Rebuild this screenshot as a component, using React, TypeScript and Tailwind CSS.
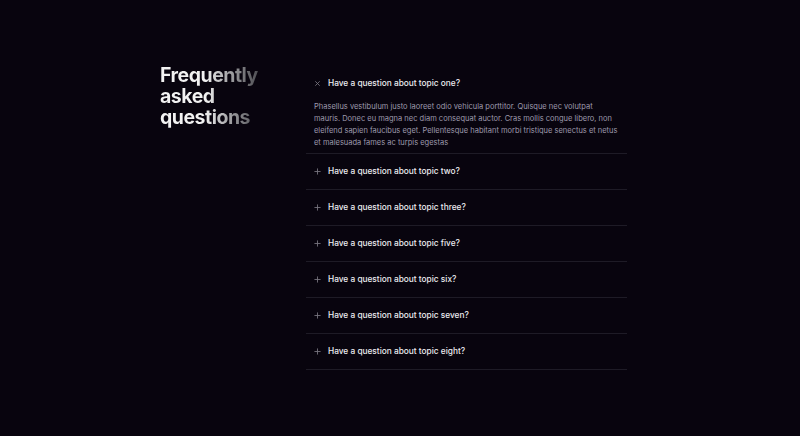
import React, { useState } from "react";

const items = [
  { q: "Have a question about topic one?", a: "Phasellus vestibulum justo laoreet odio vehicula porttitor. Quisque nec volutpat mauris. Donec eu magna nec diam consequat auctor. Cras mollis congue libero, non eleifend sapien faucibus eget. Pellentesque habitant morbi tristique senectus et netus et malesuada fames ac turpis egestas" },
  { q: "Have a question about topic two?", a: "Phasellus vestibulum justo laoreet odio vehicula porttitor." },
  { q: "Have a question about topic three?", a: "Phasellus vestibulum justo laoreet odio vehicula porttitor." },
  { q: "Have a question about topic five?", a: "Phasellus vestibulum justo laoreet odio vehicula porttitor." },
  { q: "Have a question about topic six?", a: "Phasellus vestibulum justo laoreet odio vehicula porttitor." },
  { q: "Have a question about topic seven?", a: "Phasellus vestibulum justo laoreet odio vehicula porttitor." },
  { q: "Have a question about topic eight?", a: "Phasellus vestibulum justo laoreet odio vehicula porttitor." },
];

function PlusIcon() {
  return (
    <svg width="7" height="7" viewBox="0 0 8 8" className="shrink-0">
      <path d="M4 0.5V7.5M0.5 4H7.5" stroke="#77757f" strokeWidth="1" />
    </svg>
  );
}

function XIcon() {
  return (
    <svg width="7" height="7" viewBox="0 0 8 8" className="shrink-0">
      <path d="M1.5 1.5L6.5 6.5M6.5 1.5L1.5 6.5" stroke="#77757f" strokeWidth="1" />
    </svg>
  );
}

export default function App() {
  const [open, setOpen] = useState<number>(0);
  return (
    <div
      className="w-full h-[436px] bg-[#08040e] pt-[66px]"
      style={{ fontFamily: "Inter, 'Noto Sans', sans-serif" }}
    >
      <div className="w-[480px] mx-auto grid grid-cols-[146px_321px]">
        <h2 className="text-[19.5px] font-bold tracking-tight leading-[21px] bg-linear-to-r from-[#f2f2f2] from-45% to-[#4a4a4f] to-100% bg-clip-text text-transparent w-[100px] -mt-[1px]">
          Frequently
          <br />
          asked
          <br />
          questions
        </h2>
        <div>
          {items.map((it, i) => {
            const isOpen = open === i;
            return (
              <div key={i} className="border-b border-[#1e1b26]">
                <button
                  onClick={() => setOpen(isOpen ? -1 : i)}
                  className="w-full flex items-center gap-[7px] pl-[8px] h-[35px] text-left cursor-pointer"
                >
                  {isOpen ? <XIcon /> : <PlusIcon />}
                  <span className="text-[8.3px] font-medium text-[#ececf0]">{it.q}</span>
                </button>
                {isOpen && (
                  <p className="pl-[8px] pr-[8px] pb-[4px] text-[7.5px] leading-[12px] text-[#9e9aad]">
                    {it.a}
                  </p>
                )}
              </div>
            );
          })}
        </div>
      </div>
    </div>
  );
}
